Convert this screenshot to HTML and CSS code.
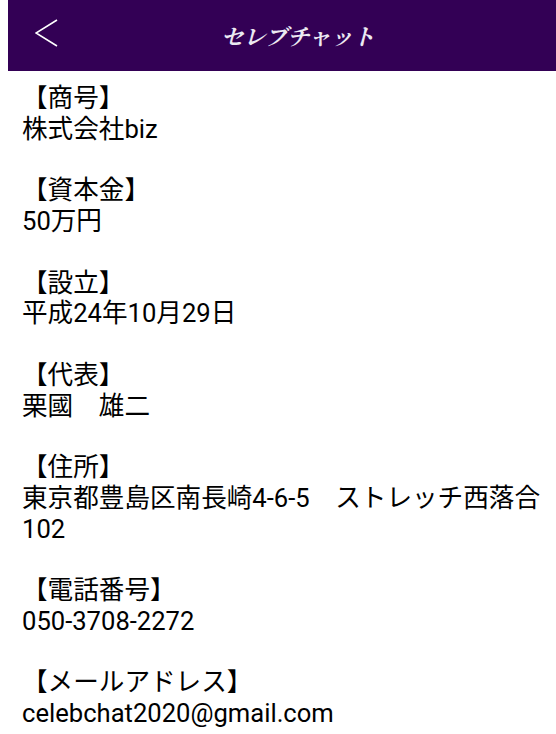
FILE: index.html
```html
<!DOCTYPE html>
<html lang="ja">
<head>
<meta charset="utf-8">
<link rel="stylesheet" href="styles.css">
</head>
<body>
<header class="bar">
  <span class="back">
    <svg width="24" height="28" viewBox="0 0 24 28"><polyline points="22,1 1,14 22,27" fill="none" stroke="#fff" stroke-width="1.6"/></svg>
  </span>
  <h1 class="title">セレブチャット</h1>
</header>
<main class="content">
  <p class="item">【商号】<br>株式会社biz</p>
  <p class="item">【資本金】<br>50万円</p>
  <p class="item">【設立】<br>平成24年10月29日</p>
  <p class="item">【代表】<br>栗國　雄二</p>
  <p class="item">【住所】<br>東京都豊島区南長崎4-6-5　ストレッチ西落合102</p>
  <p class="item">【電話番号】<br>050-3708-2272</p>
  <p class="item">【メールアドレス】<br>celebchat2020@gmail.com</p>
</main>
</body>
</html>
```
FILE: styles.css
```css
html, body { background: #fff; }
body {
  margin: 0 0 0 8px;
  font-family: Roboto, "Noto Sans CJK JP", sans-serif;
  color: #000;
}
.bar {
  height: 71px;
  background: #330055;
  display: flex;
  align-items: center;
  position: relative;
}
.back {
  display: flex;
  margin-left: 27px;
  margin-top: -5px;
}
.title {
  position: absolute;
  left: 213px;
  top: 0;
  margin: 0;
  line-height: 70px;
  font-family: "Noto Serif CJK JP", "Noto Sans CJK JP", sans-serif;
  font-size: 22.5px;
  font-weight: 700;
  font-style: italic;
  letter-spacing: -0.5px;
  color: #ece9f2;
}
.content {
  padding: 12px 10px 0 14px;
  font-size: 25.6px;
  line-height: 30.75px;
}
.item {
  margin: 0 0 30.75px 0;
}
```
